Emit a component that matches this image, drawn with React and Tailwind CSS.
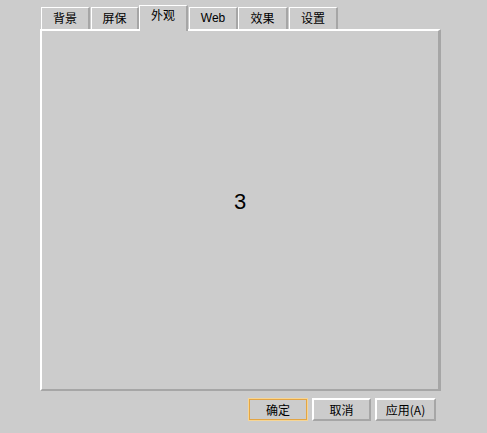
const tabs = [
  { label: '背景', cls: 'ml-[1px] w-[49px]' },
  { label: '屏保', cls: 'ml-[1px] w-[48px]' },
  { label: '外观', cls: 'ml-0 w-[49px]', active: true },
  { label: 'Web', cls: 'ml-[1px] w-[49px]', latin: true },
  { label: '效果', cls: 'ml-0 w-[50px]' },
  { label: '设置', cls: 'ml-[1px] w-[49px]' },
];

const font = "font-['Noto_Sans_CJK_SC','Liberation_Sans',sans-serif]";

const Tab = ({ label, cls, active, latin }) => (
  <div
    className={`${cls} flex items-start justify-center border-t border-l border-white border-r-2 border-r-[#a6a6a6] bg-[#cccccc] text-[12px] leading-none text-black ${
      active ? 'h-[26px] pt-[3px] -mb-[2px] relative z-10' : 'h-[22px] pt-[4px]'
    } ${latin ? "font-['Liberation_Sans',sans-serif]" : ''}`}
  >
    {label}
  </div>
);

const Button = ({ children, w, focused }) => (
  <div className={`${w} h-[23px] flex ${focused ? 'border border-[#f6d594]' : ''}`}>
    <div
      className={`flex-1 flex items-center justify-center text-[12px] leading-none text-black bg-[#cccccc] ${
        focused
          ? 'border border-[#e3a544]'
          : 'border-t-2 border-l-2 border-white border-r-2 border-b-2 border-r-[#a6a6a6] border-b-[#a6a6a6]'
      }`}
    >
      {children}
    </div>
  </div>
);

export default function App() {
  return (
    <div className={`w-[487px] h-[433px] bg-[#cccccc] pt-[5px] pl-[40px] overflow-hidden ${font}`}>
      {/* tab strip */}
      <div className="flex items-end h-[24px]">
        {tabs.map((t) => (
          <Tab key={t.label} {...t} />
        ))}
      </div>
      {/* page */}
      <div className="w-[401px] h-[362px] border-t-2 border-l-2 border-white border-r-[3px] border-b-2 border-r-[#a6a6a6] border-b-[#a6a6a6] flex items-center justify-center">
        <span className="text-[22px] leading-none text-black font-['Liberation_Sans',sans-serif] mt-[-16px]">3</span>
      </div>
      {/* dialog buttons */}
      <div className="flex w-[396px] justify-end gap-[4px] mt-[7px]">
        <Button w="w-[60px]" focused>确定</Button>
        <Button w="w-[59px]">取消</Button>
        <Button w="w-[61px]">应用(A)</Button>
      </div>
    </div>
  );
}
